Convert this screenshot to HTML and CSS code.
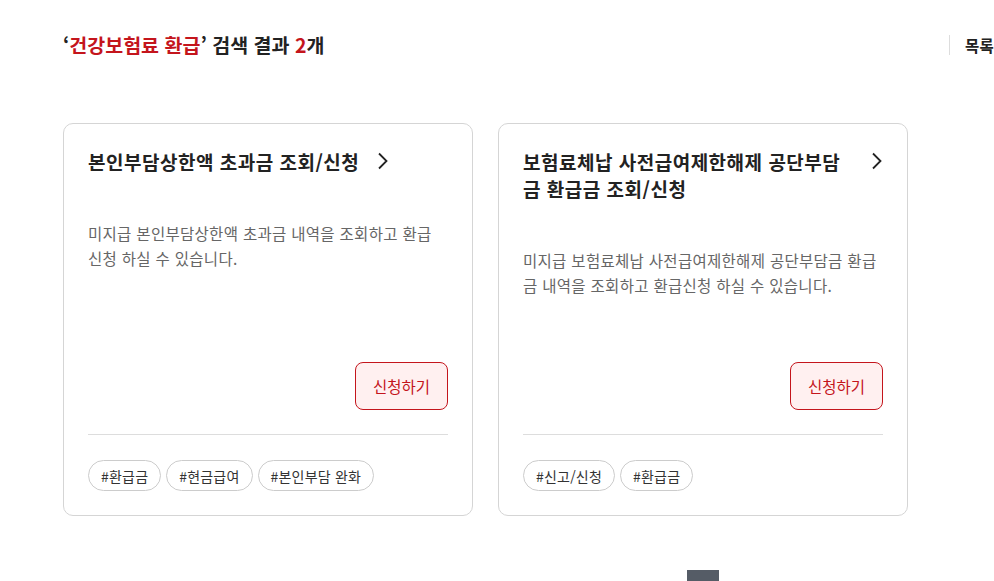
FILE: index.html
```html
<!DOCTYPE html>
<html lang="ko">
<head>
    <meta charset="UTF-8">
    <meta name="viewport" content="width=device-width, initial-scale=1.0">
    <title>검색 결과</title>
    <link rel="stylesheet" href="styles.css">
</head>
<body>
    <div class="page">
        <div class="result-head">
            <h2 class="result-title">‘<em>건강보험료 환급</em>’ 검색 결과 <em>2</em>개</h2>
            <a class="list-link" href="#">목록</a>
        </div>

        <div class="card-list">
            <div class="card">
                <div class="card-body">
                    <a class="card-title" href="#">
                        <span>본인부담상한액 초과금 조회/신청</span>
                        <svg width="12" height="18" viewBox="0 0 12 18"><path d="M2 1.5 L9.5 9 L2 16.5" fill="none" stroke="#222" stroke-width="1.8"/></svg>
                    </a>
                    <p class="card-desc">미지급 본인부담상한액 초과금 내역을 조회하고 환급 신청 하실 수 있습니다.</p>
                    <div class="card-btns">
                        <button class="btn-apply">신청하기</button>
                    </div>
                </div>
                <div class="card-tags">
                    <span class="tag">#환급금</span>
                    <span class="tag">#현금급여</span>
                    <span class="tag">#본인부담 완화</span>
                </div>
            </div>

            <div class="card">
                <div class="card-body">
                    <a class="card-title" href="#">
                        <span>보험료체납 사전급여제한해제 공단부담금 환급금 조회/신청</span>
                        <svg width="12" height="18" viewBox="0 0 12 18"><path d="M2 1.5 L9.5 9 L2 16.5" fill="none" stroke="#222" stroke-width="1.8"/></svg>
                    </a>
                    <p class="card-desc">미지급 보험료체납 사전급여제한해제 공단부담금 환급금 내역을 조회하고 환급신청 하실 수 있습니다.</p>
                    <div class="card-btns">
                        <button class="btn-apply">신청하기</button>
                    </div>
                </div>
                <div class="card-tags">
                    <span class="tag">#신고/신청</span>
                    <span class="tag">#환급금</span>
                </div>
            </div>
        </div>

        <div class="paging">
            <span class="page-on"></span>
        </div>
    </div>
</body>
</html>
```

FILE: styles.css
```css
body {
    margin: 0;
    font-family: "Noto Sans CJK KR", "Noto Sans", sans-serif;
    color: #222;
    background: #fff;
    overflow: hidden;
}
.page {
    padding: 32px 0 0 63px;
}

.result-head {
    display: flex;
    justify-content: space-between;
    align-items: center;
    height: 26px;
}
.result-title {
    margin: 0;
    font-size: 19.5px;
    font-weight: 700;
    line-height: 26px;
    letter-spacing: 0;
}
.result-title em {
    font-style: normal;
    color: #c4151c;
}
.list-link {
    display: flex;
    align-items: center;
    height: 20px;
    padding-left: 15px;
    border-left: 1px solid #ddd;
    font-size: 15.5px;
    font-weight: 700;
    letter-spacing: 0.3px;
    color: #222;
    text-decoration: none;
}

.card-list {
    display: flex;
    gap: 25px;
    margin-top: 65px;
}
.card {
    display: flex;
    flex-direction: column;
    box-sizing: border-box;
    width: 410px;
    height: 393px;
    padding: 24px;
    border: 1px solid #d5d5d5;
    border-radius: 10px;
}
.card-body {
    flex: 1;
    display: flex;
    flex-direction: column;
}
.card-title {
    display: flex;
    align-items: flex-start;
    gap: 18px;
    font-size: 19px;
    font-weight: 700;
    line-height: 27px;
    letter-spacing: 0.5px;
    color: #222;
    text-decoration: none;
}
.card-title svg {
    flex: none;
    margin-top: 4px;
}
.card-desc {
    margin: 46px 0 0;
    font-size: 15.5px;
    line-height: 25px;
    letter-spacing: 0.3px;
    color: #666;
}
.card-btns {
    margin-top: auto;
    display: flex;
    justify-content: flex-end;
}
.btn-apply {
    width: 93px;
    height: 48px;
    border: 1px solid #c4151c;
    border-radius: 8px;
    background: #fff0f0;
    color: #c4151c;
    font-family: inherit;
    font-size: 15.5px;
    cursor: pointer;
}

.card-tags {
    display: flex;
    gap: 5px;
    margin-top: 24px;
    padding-top: 25px;
    border-top: 1px solid #ddd;
}
.tag {
    display: flex;
    align-items: center;
    box-sizing: border-box;
    height: 31px;
    padding: 0 12px;
    border: 1px solid #ccc;
    border-radius: 16px;
    font-size: 14px;
    letter-spacing: 0.2px;
    color: #333;
}

.paging {
    margin-top: 54px;
    padding-left: 624px;
}
.page-on {
    display: block;
    width: 32px;
    height: 32px;
    background: #555c66;
}
```
